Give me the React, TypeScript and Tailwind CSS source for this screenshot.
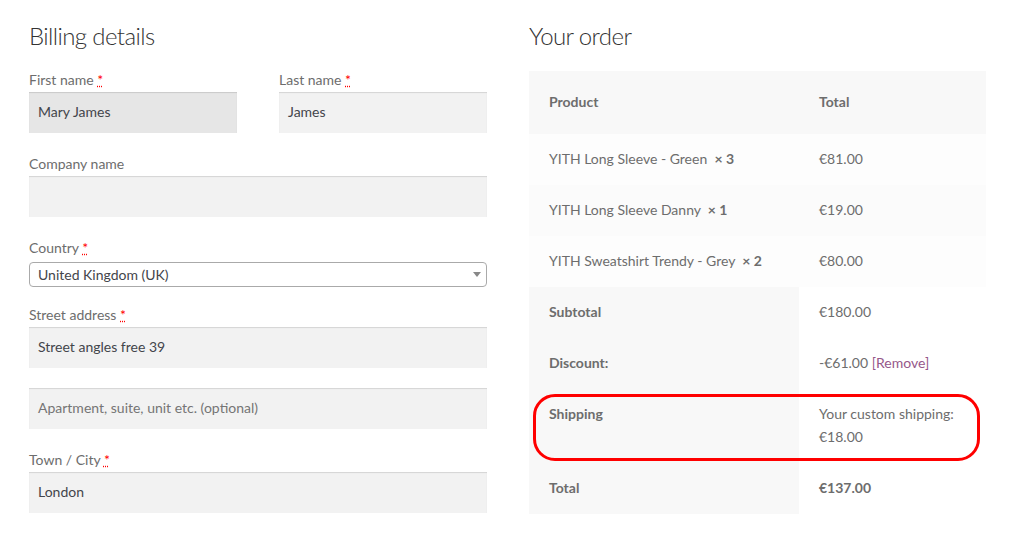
import React from "react";

const Req = () => (
  <>
    {"\u00a0"}
    <abbr title="required" className="text-[#ff0000] underline decoration-dotted">
      *
    </abbr>
  </>
);

const Label = ({ children, req }: { children: React.ReactNode; req?: boolean }) => (
  <div className="h-[23px] leading-[21px] text-[14px] text-[#6d6d6d]">
    {children}
    {req && <Req />}
  </div>
);

const Field = ({
  value,
  placeholder,
  focused,
}: {
  value?: string;
  placeholder?: string;
  focused?: boolean;
}) => (
  <div
    className={
      "h-[41px] shadow-[inset_0_1px_1px_rgba(0,0,0,0.125)] pl-[9px] pb-[2px] flex items-center text-[14px] " +
      (focused ? "bg-[#e6e6e6] " : "bg-[#f2f2f2] ") +
      (value ? "text-[#43454b]" : "text-[#757575]")
    }
  >
    {value ?? placeholder}
  </div>
);

const Qty = ({ n }: { n: number }) => (
  <>
    {" \u00a0"}
    <strong className="font-bold">{"\u00d7\u00a0" + n}</strong>
  </>
);

const thHead = "bg-[#f8f8f8] text-left font-bold px-[20px] pt-[19px] pb-[21px]";
const cell = "px-[20px] pt-[13px] pb-[15px] align-top";
const thFoot = "bg-[#f8f8f8] text-left font-bold " + cell;

export default function App() {
  return (
    <div className="relative w-[1017px] h-[536px] overflow-hidden bg-white font-['Lato',sans-serif]">
      <div className="flex gap-[42px] pl-[29px] pt-[20px]">
        {/* Billing details */}
        <div className="w-[458px] flex flex-col">
          <h3 className="h-[32px] leading-[32px] text-[24px] tracking-[-0.6px] font-light text-[#333333] mb-[17px]">
            Billing details
          </h3>
          <div className="flex gap-[42px]">
            <div className="w-[208px]">
              <Label req>First name</Label>
              <Field value="Mary James" focused />
            </div>
            <div className="w-[208px]">
              <Label req>Last name</Label>
              <Field value="James" />
            </div>
          </div>
          <div className="mt-[20px]">
            <Label>Company name</Label>
            <Field />
          </div>
          <div className="mt-[20px]">
            <Label req>Country</Label>
            <div className="mt-[2px] h-[25px] border border-[#aaaaaa] rounded-[4px] bg-white flex items-center justify-between pl-[8px] pr-[5px] pb-[1px] text-[14px] text-[#43454b]">
              <span>United Kingdom (UK)</span>
              <span className="w-0 h-0 border-l-[4px] border-r-[4px] border-t-[5px] border-l-transparent border-r-transparent border-t-[#888888]" />
            </div>
          </div>
          <div className="mt-[17px]">
            <Label req>Street address</Label>
            <Field value="Street angles free 39" />
          </div>
          <div className="mt-[20px]">
            <Field placeholder="Apartment, suite, unit etc. (optional)" />
          </div>
          <div className="mt-[20px]">
            <Label req>Town / City</Label>
            <Field value="London" />
          </div>
        </div>

        {/* Your order */}
        <div className="w-[457px] flex flex-col">
          <h3 className="h-[32px] leading-[32px] text-[24px] tracking-[-0.6px] font-light text-[#333333] mb-[19px]">
            Your order
          </h3>
          <table className="w-[457px] table-fixed border-collapse text-[14px] leading-[23px] text-[#6d6d6d]">
            <thead>
              <tr>
                <th className={"w-[270px] " + thHead}>Product</th>
                <th className={thHead}>Total</th>
              </tr>
            </thead>
            <tbody>
              <tr>
                <td className={"bg-[#fdfdfd] whitespace-nowrap " + cell}>
                  YITH Long Sleeve - Green
                  <Qty n={3} />
                </td>
                <td className={"bg-[#fdfdfd] " + cell}>€81.00</td>
              </tr>
              <tr>
                <td className={"bg-[#fbfbfb] whitespace-nowrap " + cell}>
                  YITH Long Sleeve Danny
                  <Qty n={1} />
                </td>
                <td className={"bg-[#fbfbfb] " + cell}>€19.00</td>
              </tr>
              <tr>
                <td className={"bg-[#fdfdfd] whitespace-nowrap " + cell}>
                  YITH Sweatshirt Trendy - Grey
                  <Qty n={2} />
                </td>
                <td className={"bg-[#fdfdfd] " + cell}>€80.00</td>
              </tr>
            </tbody>
            <tfoot>
              <tr>
                <th className={thFoot}>Subtotal</th>
                <td className={cell}>€180.00</td>
              </tr>
              <tr>
                <th className={thFoot}>Discount:</th>
                <td className={"whitespace-nowrap " + cell}>
                  -€61.00 <span className="text-[#96588a]">[Remove]</span>
                </td>
              </tr>
              <tr>
                <th className={thFoot}>Shipping</th>
                <td className={"whitespace-nowrap " + cell}>
                  <div>Your custom shipping:</div>
                  <div>€18.00</div>
                </td>
              </tr>
              <tr>
                <th className={thFoot}>Total</th>
                <td className={cell}>
                  <strong className="font-bold">€137.00</strong>
                </td>
              </tr>
            </tfoot>
          </table>
        </div>
      </div>

      {/* red annotation */}
      <div className="absolute left-[533px] top-[394px] w-[447px] h-[67px] border-[3px] border-[#ff0000] rounded-[22px] pointer-events-none" />
    </div>
  );
}
